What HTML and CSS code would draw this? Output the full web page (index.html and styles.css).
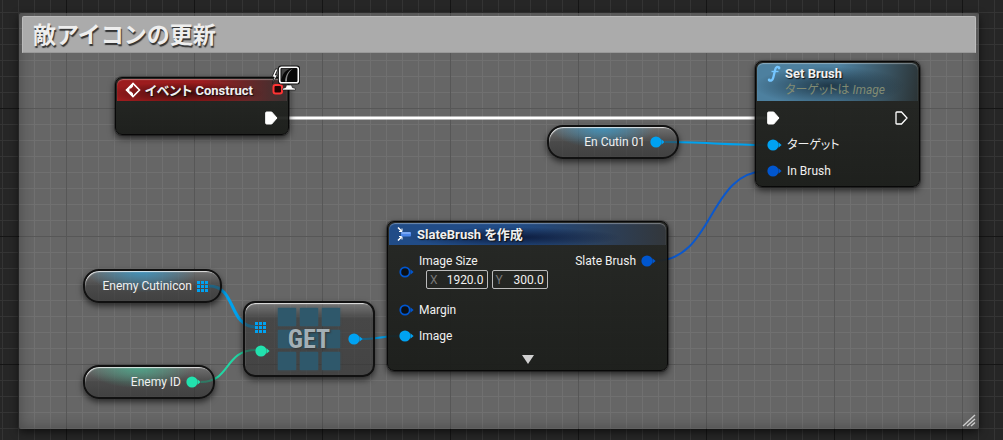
FILE: index.html
```html
<!DOCTYPE html>
<html lang="ja">
<head>
    <meta charset="UTF-8">
    <meta name="viewport" content="width=device-width, initial-scale=1.0">
    <title>敵アイコンの更新</title>
    <link rel="stylesheet" href="styles.css">
</head>
<body>

    <!-- shared pin shapes -->
    <svg class="defs" width="0" height="0" aria-hidden="true">
        <symbol id="pin" viewBox="0 0 15 12">
            <circle cx="6" cy="6" r="5.6" fill="currentColor"/>
            <path d="M11.5 3.2L14.6 6l-3.1 2.8z" fill="currentColor"/>
        </symbol>
        <symbol id="pin-open" viewBox="0 0 15 12">
            <circle cx="6" cy="6" r="4.7" fill="#0b0f14" stroke="currentColor" stroke-width="1.8"/>
            <path d="M11.5 3.2L14.6 6l-3.1 2.8z" fill="currentColor"/>
        </symbol>
        <symbol id="pin-array" viewBox="0 0 11 11">
            <path d="M0 0h3v3H0zM4 0h3v3H4zM8 0h3v3H8zM0 4h3v3H0zM4 4h3v3H4zM8 4h3v3H8zM0 8h3v3H0zM4 8h3v3H4zM8 8h3v3H8z" fill="currentColor"/>
        </symbol>
        <symbol id="exec" viewBox="0 0 13 14">
            <path d="M1.5 1h5.2L12 7l-5.3 6H1.5Q.7 13 .7 12.2V1.8Q.7 1 1.5 1z" fill="#fff" stroke="#fff"/>
        </symbol>
        <symbol id="exec-open" viewBox="0 0 13 14">
            <path d="M1.7 1h4.8L12 7l-5.5 6H1.7Q1 13 1 12.3V1.7Q1 1 1.7 1z" fill="none" stroke="#fff" stroke-width="1.3"/>
        </symbol>
    </svg>

    <main class="graph">
        <section class="comment">
            <h1 class="comment-title">敵アイコンの更新</h1>
            <svg class="grip" width="14" height="13" viewBox="0 0 14 13"><path d="M1 12L13 1M5 12l8-7M9 12l4-3.5" stroke="#ccc" stroke-width="1.4" fill="none"/></svg>
        </section>

        <svg class="wires" width="100%" height="100%" fill="none" aria-hidden="true">
            <path d="M276 118H767" stroke="#fff" stroke-width="3"/>
            <path d="M665 142C700 142 730 145 767 145" stroke="#00a2ee" stroke-width="2"/>
            <path d="M654 261C715 261 707 171 767 171" stroke="#0b58cc" stroke-width="2"/>
            <path d="M209 286C237 286 228 327 256 327" stroke="#00a2ee" stroke-width="3"/>
            <path d="M201 382C231 382 224 350 256 350" stroke="#22d6a4" stroke-width="2"/>
            <path d="M361 339C375 339 386 336 399 336" stroke="#00a2ee" stroke-width="2"/>
        </svg>

        <article class="node node-event">
            <header class="node-header">
                <svg width="16" height="16" viewBox="0 0 16 16"><path d="M8 1.5L1.5 8 8 14.500 14.500 8z" fill="none" stroke="#fff" stroke-width="1.600"/><path d="M8 1L1 8l7 7v-3.500L6 9.500H4.500v-3H6L8 4.500z" fill="#fff"/></svg>
                <h2>イベント Construct</h2>
            </header>
            <div class="pin-row out"><svg width="13" height="14"><use href="#exec"/></svg></div>
            <svg class="badge" width="30" height="32" viewBox="0 0 30 32">
                <rect x="2.5" y="20" width="8.5" height="8.500" rx="2" fill="#240404" stroke="#f33" stroke-width="2"/>
                <path d="M4.500 4L1 12h2.200L1.500 18.500 6.500 10H4.300L7 4z" fill="#fff" stroke="#111" stroke-width=".8"/>
                <path d="M15.500 20h5l.8 2.500 3.200 1v1.500h-13v-1.500l3.200-1z" fill="#fff" stroke="#111" stroke-width=".6"/>
                <rect x="7" y=".5" width="22" height="19" rx="3" fill="#111"/>
                <rect x="8.700" y="2.200" width="18.600" height="15.600" rx="2" fill="#080808" stroke="#fff" stroke-width="1.600"/>
                <path d="M10.500 16.500c0-7 4-12 10-13H10.500z" fill="#444"/>
                <path d="M14 16.500c.5-6 3-11 8-13-5 4.500-6 7-6 13z" fill="#888"/>
            </svg>
        </article>

        <article class="node node-function">
            <header class="node-header">
                <svg width="14" height="18" viewBox="0 0 14 18"><path d="M12 2.500C10.500 1.200 8.900 1.800 8.300 4.300L6.300 12.500C5.700 15.200 4 16.400 2 15.200" fill="none" stroke="#75c6ff" stroke-width="2.300" stroke-linecap="round"/><path d="M4.500 6.500h7" stroke="#75c6ff" stroke-width="1.400"/><circle cx="12" cy="3" r="1.400" fill="#75c6ff"/><circle cx="2.200" cy="14.800" r="1.400" fill="#75c6ff"/></svg>
                <div>
                    <h2>Set Brush</h2>
                    <p class="subtitle">ターゲットは <em>Image</em></p>
                </div>
            </header>
            <div class="pin-row both">
                <svg width="13" height="14"><use href="#exec"/></svg>
                <svg width="13" height="14"><use href="#exec-open"/></svg>
            </div>
            <div class="pin-row object"><svg width="15" height="12"><use href="#pin"/></svg><span>ターゲット</span></div>
            <div class="pin-row struct"><svg width="15" height="12"><use href="#pin"/></svg><span>In Brush</span></div>
        </article>

        <article class="node node-make">
            <header class="node-header">
                <svg width="14" height="16" viewBox="0 0 14 16"><path d="M1 1.500L4.500 5M1 14.500L4.500 11" stroke="#fff" stroke-width="1.600"/><path d="M5 2.500V5.500H2M5 13.500V10.500H2" stroke="#fff" fill="none"/><rect x="4" y="6" width="10" height="4.500" rx="1" fill="#4b86ea"/><path d="M4.500 7h9" stroke="#a8c9ff"/></svg>
                <h2>SlateBrush を作成</h2>
            </header>
            <div class="node-columns">
                <div class="inputs">
                    <div class="vector-row struct">
                        <svg width="15" height="12"><use href="#pin-open"/></svg>
                        <div class="vector">
                            <span>Image Size</span>
                            <div class="fields">
                                <label class="field">X<input class="wide" type="text" value="1920.0"></label>
                                <label class="field">Y<input type="text" value="300.0"></label>
                            </div>
                        </div>
                    </div>
                    <div class="pin-row struct"><svg width="15" height="12"><use href="#pin-open"/></svg><span>Margin</span></div>
                    <div class="pin-row object"><svg width="15" height="12"><use href="#pin"/></svg><span>Image</span></div>
                </div>
                <div class="pin-row out struct"><span>Slate Brush</span><svg width="15" height="12"><use href="#pin"/></svg></div>
            </div>
            <button class="expand" type="button" aria-label="展開"><svg width="12" height="9" viewBox="0 0 12 9"><path d="M0 0h12L6 9z" fill="#d0d0d0"/></svg></button>
        </article>

        <div class="variable object var-cutin"><span>En Cutin 01</span><svg width="15" height="12"><use href="#pin"/></svg></div>
        <div class="variable object var-icons"><span>Enemy Cutinicon</span><svg width="11" height="11"><use href="#pin-array"/></svg></div>
        <div class="variable integer var-id"><span>Enemy ID</span><svg width="15" height="12"><use href="#pin"/></svg></div>

        <article class="get-node">
            <div class="get-inputs">
                <svg class="object" width="11" height="11"><use href="#pin-array"/></svg>
                <svg class="integer" width="15" height="12"><use href="#pin"/></svg>
            </div>
            <div class="get-label">
                <i></i><i></i><i></i><i></i><i></i><i></i><i></i><i></i><i></i>
                <h2>GET</h2>
            </div>
            <svg class="object" width="15" height="12"><use href="#pin"/></svg>
        </article>
    </main>

</body>
</html>
```
FILE: styles.css
```css
* {
    box-sizing: border-box;
}

body {
    margin: 0;
    background: #262626;
    color: #f0f0f0;
    font-family: Roboto, "Noto Sans CJK JP", sans-serif;
    font-size: 12px;
    line-height: 16px;
}

h1, h2, p {
    margin: 0;
}

svg {
    display: block;
    flex: none;
}

.defs {
    position: absolute;
}

.graph {
    position: relative;
    display: flex;
    min-height: 100vh;
    padding: 13px 24px 11px 19px;
    overflow: hidden;
    background-color: #262626;
    background-image:
        linear-gradient(90deg, #151515 1px, transparent 1px),
        linear-gradient(#151515 1px, transparent 1px),
        linear-gradient(90deg, #343434 1px, transparent 1px),
        linear-gradient(#343434 1px, transparent 1px);
    background-size: 128px 128px, 128px 128px, 16px 16px, 16px 16px;
    background-position: 66px 0, 0 108px, 2px 0, 0 12px;
}

/* comment box */
.comment {
    flex: 1;
    padding: 3px;
    border-radius: 2px;
    background-color: #666;
    background-image:
        linear-gradient(90deg, #575757 1px, transparent 1px),
        linear-gradient(#575757 1px, transparent 1px),
        linear-gradient(90deg, #707070 1px, transparent 1px),
        linear-gradient(#707070 1px, transparent 1px);
    background-size: 128px 128px, 128px 128px, 16px 16px, 16px 16px;
    background-position: 47px 0, 0 95px, 15px 0, 0 15px;
    box-shadow: inset 0 0 14px rgba(0, 0, 0, 0.3), 0 3px 8px rgba(0, 0, 0, 0.6);
    position: relative;
}

.comment-title {
    padding: 3px 10px 1px;
    border: 1px solid #bbb;
    border-bottom-color: #999;
    border-radius: 2px 2px 0 0;
    background: #ababab;
    color: #eee;
    font-size: 23px;
    line-height: 31px;
    text-shadow: 1px 2px 1px #333;
}

.grip {
    position: absolute;
    right: 3px;
    bottom: 2px;
}

.wires {
    position: absolute;
    top: 0;
    left: 0;
}

/* nodes */
.node {
    position: absolute;
    padding: 2px;
    border-radius: 7px;
    background: linear-gradient(rgba(35, 37, 34, 0.94), rgba(26, 28, 25, 0.94));
    border: 1px solid #080808;
    box-shadow: 0 0 0 1px rgba(0, 0, 0, 0.3), 0 3px 7px rgba(0, 0, 0, 0.7);
    font-feature-settings: "palt";
}

.node-header {
    display: flex;
    align-items: center;
    gap: 4px;
    height: 22px;
    margin: -1px -1px 0;
    padding: 0 8px;
    border-radius: 6px 6px 0 0;
    box-shadow: inset 0 1px 1px rgba(255, 255, 255, 0.35);
}

.node-header h2 {
    font-size: 13px;
    font-weight: bold;
    line-height: 17px;
    white-space: nowrap;
    text-shadow: 1px 1px 1px #111;
}

.node-event {
    left: 115px;
    top: 77px;
    width: 174px;
    height: 58px;
}

.node-event .node-header {
    background: radial-gradient(ellipse at 40% 65%, rgba(35, 5, 5, 0.75), transparent 55%), linear-gradient(90deg, #9c1c1e 50%, #3a3131);
}

.badge {
    position: absolute;
    top: -13px;
    right: -13px;
}

.node-function {
    left: 755px;
    top: 61px;
    width: 165px;
    height: 126px;
}

.node-function .node-header {
    align-items: flex-start;
    height: 38px;
    padding: 2px 10px;
    background: radial-gradient(ellipse at 45% 60%, rgba(20, 38, 50, 0.8), transparent 60%), linear-gradient(100deg, #4d809f 50%, #2b3335);
}

.subtitle {
    color: #818b73;
    white-space: nowrap;
}

.node-make {
    left: 387px;
    top: 221px;
    width: 281px;
    height: 150px;
}

.node-make .node-header {
    gap: 6px;
    background: radial-gradient(ellipse at 45% 65%, rgba(8, 18, 48, 0.85), transparent 50%), linear-gradient(90deg, #214c87 45%, #33373b);
}

/* pins */
.pin-row {
    display: flex;
    align-items: center;
    gap: 5px;
    height: 26px;
    padding: 0 9px;
    white-space: nowrap;
}

.pin-row.out {
    justify-content: flex-end;
}

.pin-row.both {
    justify-content: space-between;
}

.node-event .pin-row {
    margin-top: 4px;
    padding: 0 8px;
}

.node-function .pin-row.both {
    margin: 4px 0 1px;
}

.object svg, svg.object {
    color: #00a2f2;
}

.struct svg {
    color: #0056cf;
}

.integer svg, svg.integer {
    color: #22e2ae;
}

.node-columns {
    display: flex;
    justify-content: space-between;
    align-items: flex-start;
    padding-top: 3px;
}

.vector-row {
    display: flex;
    align-items: center;
    gap: 5px;
    height: 48px;
    margin-bottom: 1px;
    padding: 0 9px;
}

.vector {
    padding-bottom: 2px;
}

.fields {
    display: flex;
    gap: 4px;
    padding: 1px 0 0 7px;
}

.field {
    display: flex;
    align-items: center;
    height: 19px;
    padding: 0 3px;
    border: 1px solid #bbb;
    border-radius: 2px;
    color: #777;
}

.field input {
    width: 41px;
    padding: 0;
    border: 0;
    outline: none;
    background: transparent;
    color: #f0f0f0;
    font: inherit;
    text-align: right;
}

.field input.wide {
    width: 46px;
}

.expand {
    display: block;
    margin: 6px auto 0;
    padding: 0;
    border: 0;
    background: transparent;
}

/* variable getters */
.variable {
    position: absolute;
    display: flex;
    align-items: center;
    justify-content: flex-end;
    gap: 5px;
    height: 34px;
    padding-right: 12px;
    border: 2px solid #111;
    border-radius: 16px;
    box-shadow: inset 1px 2px 1px -1px rgba(255, 255, 255, 0.8), 0 3px 6px rgba(0, 0, 0, 0.6);
    white-space: nowrap;
    background: radial-gradient(ellipse at 42% 0, rgba(60, 150, 195, 0.9), transparent 50%), linear-gradient(rgba(120, 120, 120, 0.6), rgba(55, 55, 55, 0.6) 50%, rgba(40, 40, 40, 0.6));
}

.variable.integer {
    background: radial-gradient(ellipse at 42% 0, rgba(75, 170, 140, 0.9), transparent 50%), linear-gradient(rgba(120, 120, 120, 0.6), rgba(55, 55, 55, 0.6) 50%, rgba(40, 40, 40, 0.6));
}

.var-cutin {
    left: 547px;
    top: 125px;
    width: 132px;
}

.var-icons {
    left: 83px;
    top: 269px;
    width: 139px;
}

.var-id {
    left: 83px;
    top: 365px;
    width: 132px;
}

/* array get */
.get-node {
    position: absolute;
    left: 243px;
    top: 301px;
    width: 132px;
    height: 76px;
    display: flex;
    align-items: center;
    justify-content: space-between;
    padding: 0 10px;
    border: 2px solid #111;
    border-radius: 12px;
    background: linear-gradient(rgba(130, 130, 130, 0.6), rgba(50, 50, 50, 0.6) 22%, rgba(45, 45, 45, 0.6));
    box-shadow: inset 1px 2px 1px -1px rgba(255, 255, 255, 0.8), 0 3px 6px rgba(0, 0, 0, 0.6);
}

.get-inputs {
    display: grid;
    gap: 12px;
}

.get-label {
    display: grid;
    grid-template-columns: repeat(3, 18px);
    gap: 4px;
    position: relative;
}

.get-label i {
    height: 18px;
    background: #2f586b;
    box-shadow: 0 0 2px #2f586b;
}

.get-label h2 {
    position: absolute;
    inset: 0;
    color: #a3afb5;
    font-family: "Roboto Condensed", Roboto, sans-serif;
    font-size: 26px;
    line-height: 62px;
    text-align: center;
    text-shadow: 1px 1px 2px #333;
}
```
